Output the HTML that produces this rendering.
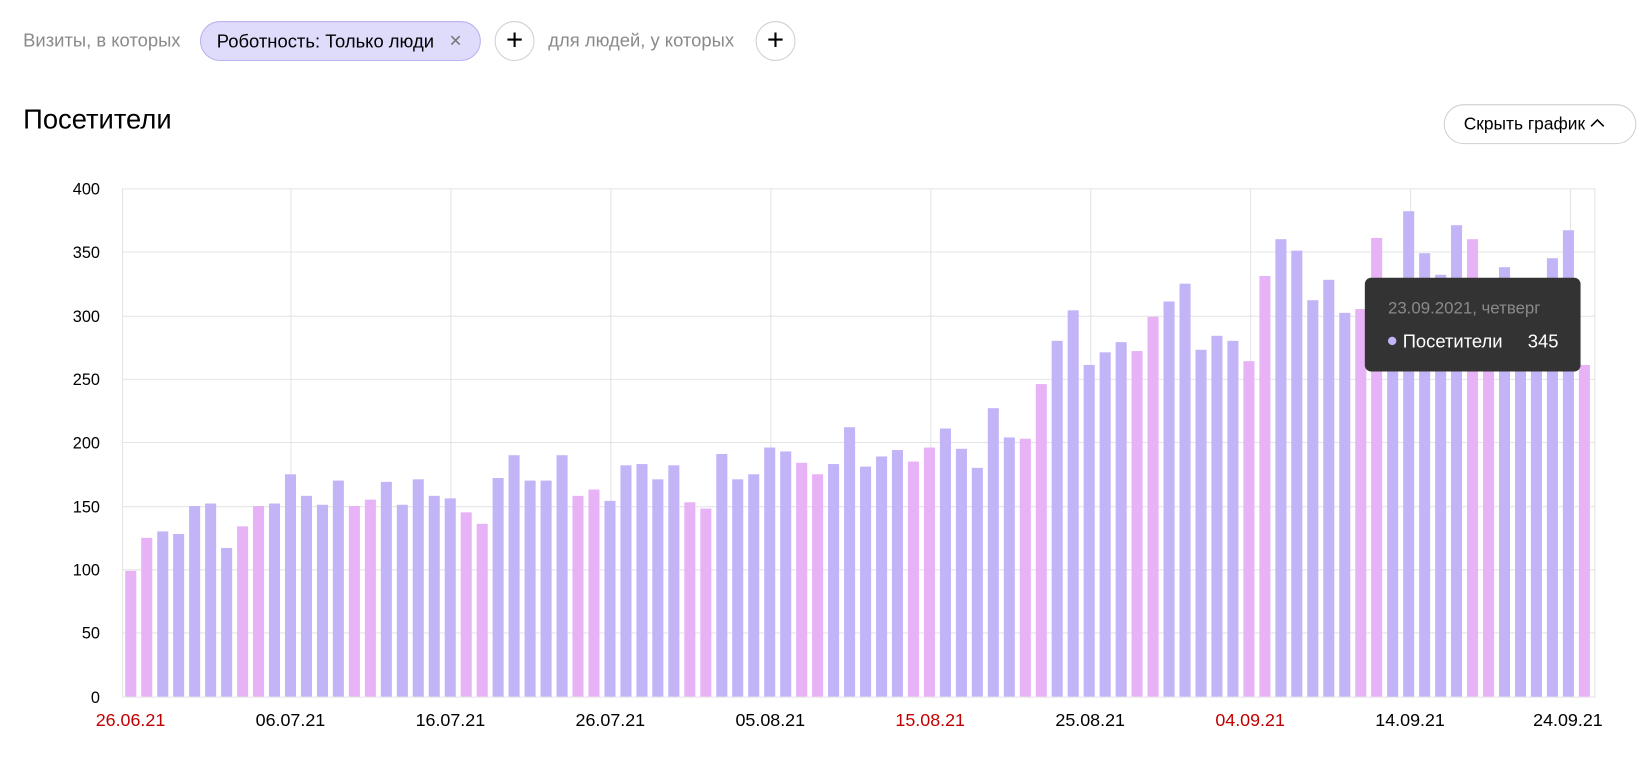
<!DOCTYPE html>
<html><head><meta charset="utf-8">
<style>
html,body{margin:0;padding:0}
body{width:1650px;height:774px;background:#fff;font-family:"Liberation Sans","Noto Sans CJK SC",sans-serif;overflow:hidden;position:relative}
#w{position:absolute;left:0;top:0;width:1568px;height:736px;transform:scale(1.0523);transform-origin:0 0}
.a{position:absolute;white-space:nowrap}
.g{color:#8a8a8a;font-size:17.5px}
.chip{left:190px;top:20px;width:267px;height:38px;border:1px solid #b9b3ef;background:#dedbfb;border-radius:19px;box-sizing:border-box;font-size:17.5px;line-height:36px;padding-left:15px;color:#000}
.plus{width:38px;height:38px;border:1px solid #d0d0d0;border-radius:50%;box-sizing:border-box;text-align:center;line-height:34px;font-size:28px;color:#000}
.btn{left:1372px;top:99px;width:183px;height:38px;border:1px solid #d0d0d0;border-radius:19px;box-sizing:border-box;font-size:16.5px;line-height:36px;padding-left:18px}
svg text{font-family:"Liberation Sans",sans-serif;font-size:15.5px}
</style></head><body><div id="w">
<div class="a g" style="left:22px;top:28px">Визиты, в которых</div>
<div class="a chip">Роботность: Только люди <span style="color:#777;font-size:20px;position:absolute;left:236px;top:0px">×</span></div>
<div class="a plus" style="left:470px;top:20px">+</div>
<div class="a g" style="left:521px;top:28px">для людей, у которых</div>
<div class="a plus" style="left:718px;top:20px">+</div>
<div class="a" style="left:22px;top:98px;font-size:26px">Посетители</div>
<div class="a btn">Скрыть график <svg width="14" height="10" style="vertical-align:1px"><path d="M1 8 L7 2 L13 8" stroke="#000" stroke-width="1.5" fill="none"/></svg></div>
<svg class="a" style="left:0;top:0" width="1568" height="736">
<g stroke="#e4e4e4" stroke-width="1">
<line x1="116" y1="179.5" x2="1516" y2="179.5"/><line x1="116" y1="239.5" x2="1516" y2="239.5"/><line x1="116" y1="300.5" x2="1516" y2="300.5"/><line x1="116" y1="360.5" x2="1516" y2="360.5"/><line x1="116" y1="420.5" x2="1516" y2="420.5"/><line x1="116" y1="481.5" x2="1516" y2="481.5"/><line x1="116" y1="541.5" x2="1516" y2="541.5"/><line x1="116" y1="601.5" x2="1516" y2="601.5"/><line x1="116" y1="662.5" x2="1516" y2="662.5"/>
<line x1="116.5" y1="179" x2="116.5" y2="662"/><line x1="1515.5" y1="179" x2="1515.5" y2="662"/>
<line x1="276.5" y1="179" x2="276.5" y2="662"/><line x1="428.5" y1="179" x2="428.5" y2="662"/><line x1="580.5" y1="179" x2="580.5" y2="662"/><line x1="732.5" y1="179" x2="732.5" y2="662"/><line x1="884.5" y1="179" x2="884.5" y2="662"/><line x1="1036.5" y1="179" x2="1036.5" y2="662"/><line x1="1188.5" y1="179" x2="1188.5" y2="662"/><line x1="1340.5" y1="179" x2="1340.5" y2="662"/><line x1="1492.5" y1="179" x2="1492.5" y2="662"/>
</g>
<g id="bars"></g>
<g text-anchor="end">
<text x="95" y="185">400</text><text x="95" y="245">350</text><text x="95" y="306">300</text><text x="95" y="366">250</text><text x="95" y="426">200</text><text x="95" y="487">150</text><text x="95" y="547">100</text><text x="95" y="607">50</text><text x="95" y="668">0</text>
</g>
<g text-anchor="middle" style="font-size:17px">
<text x="124" y="690" fill="#c00000" style="font-size:17px">26.06.21</text><text x="276" y="690" style="font-size:17px">06.07.21</text><text x="428" y="690" style="font-size:17px">16.07.21</text><text x="580" y="690" style="font-size:17px">26.07.21</text><text x="732" y="690" style="font-size:17px">05.08.21</text><text x="884" y="690" fill="#c00000" style="font-size:17px">15.08.21</text><text x="1036" y="690" style="font-size:17px">25.08.21</text><text x="1188" y="690" fill="#c00000" style="font-size:17px">04.09.21</text><text x="1340" y="690" style="font-size:17px">14.09.21</text><text x="1490" y="690" style="font-size:17px">24.09.21</text>
</g>
<rect x="1297" y="264" width="205" height="89" rx="6" fill="#333"/>
<text x="1319" y="298" fill="#8a8a8a" style="font-size:16px">23.09.2021, четверг</text>
<circle cx="1323" cy="324" r="4" fill="#c3b4f8"/>
<text x="1333" y="330" fill="#fff" style="font-size:17.5px">Посетители</text>
<text x="1481" y="330" fill="#fff" text-anchor="end" style="font-size:17.5px">345</text>
</svg>
</div>
<script>
var v=[99,125,130,128,150,152,117,134,150,152,175,158,151,170,150,155,169,151,171,158,156,145,136,172,190,170,170,190,158,163,154,182,183,171,182,153,148,191,171,175,196,193,184,175,183,212,181,189,194,185,196,211,195,180,227,204,203,246,280,304,261,271,279,272,299,311,325,273,284,280,264,331,360,351,312,328,302,305,361,300,382,349,332,371,360,280,338,310,300,345,367,261];
var s='';
for(var i=0;i<v.length;i++){var x=124+i*15.18-5;var h=v[i]*1.2075;var d=(i%7==0||i%7==1);
s+='<rect x="'+x.toFixed(1)+'" y="'+(662-h).toFixed(1)+'" width="10.5" height="'+h.toFixed(1)+'" fill="'+(d?'#e8b2f6':'#c3b4f8')+'"/>';}
document.getElementById('bars').innerHTML=s;
</script>
</body></html>
